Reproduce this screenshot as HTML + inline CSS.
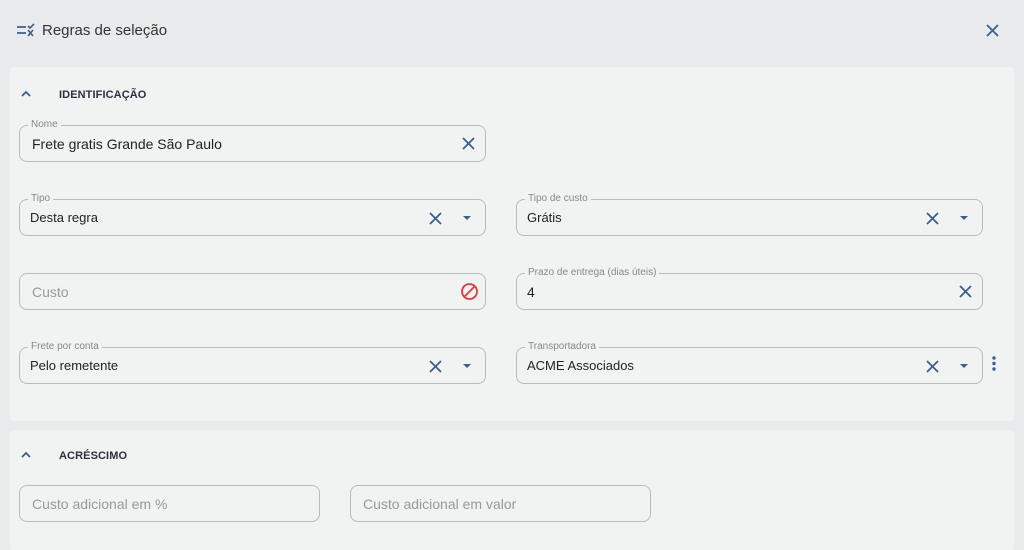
<!DOCTYPE html>
<html><head><meta charset="utf-8"><style>
*{box-sizing:border-box;margin:0;padding:0}
body{width:1024px;height:544px;overflow:hidden;background:#e9eaeb;font-family:"Liberation Sans",sans-serif;position:relative;color:#2b2b2b}
.hdr{position:absolute;left:0;top:0;width:1024px;height:62px}
.title{position:absolute;left:42px;top:22px;font-size:15px;color:#333}
.panel{position:absolute;left:10px;width:1004px;background:#f1f2f2;border-radius:3px}
.sec{position:absolute;font-size:11px;font-weight:bold;color:#2a3140;letter-spacing:0.1px}
.f{position:absolute;height:37px;border:1px solid #b9bcbe;border-radius:8px}
.lab{position:absolute;top:-7px;left:8px;font-size:10px;color:#888;background:#f1f2f2;padding:0 3px;line-height:12px}
.v{position:absolute;left:10px;top:10px;font-size:13px;color:#222}
.ph{color:#999;font-size:14px}
svg{position:absolute}
</style></head><body>
<div class="hdr">
<svg style="left:16px;top:23px" width="20" height="14" viewBox="0 0 20 14"><path d="M1 4h9M1 10h9" stroke="#3b5f8f" stroke-width="1.8"/><path d="M12 3l2 2 4-4M12 7l5 6M17 7l-5 6" stroke="#3b5f8f" stroke-width="1.6" fill="none"/></svg>
<div class="title">Regras de seleção</div>
<svg style="left:986px;top:24px" width="13" height="13" viewBox="0 0 13 13"><path d="M1 1l11 11M12 1L1 12" stroke="#3b5f8f" stroke-width="1.8"/></svg>
</div>
<div class="panel" style="top:67px;height:354px"></div>
<div class="panel" style="top:430px;height:120px"></div>
<svg style="left:20px;top:90px" width="12" height="8" viewBox="0 0 12 8"><path d="M2 6l4-4 4 4" stroke="#3b5f8f" stroke-width="1.8" fill="none"/></svg>
<div class="sec" style="left:59px;top:89px">IDENTIFICAÇÃO</div>
<svg style="left:20px;top:451px" width="12" height="8" viewBox="0 0 12 8"><path d="M2 6l4-4 4 4" stroke="#3b5f8f" stroke-width="1.8" fill="none"/></svg>
<div class="sec" style="left:59px;top:450px">ACRÉSCIMO</div>

<div class="f" style="left:19px;top:125px;width:467px"><div class="lab">Nome</div><div class="v" style="left:12px;font-size:14px">Frete gratis Grande São Paulo</div>
<svg style="left:442px;top:11px" width="13" height="13" viewBox="0 0 13 13"><path d="M1 1l11 11M12 1L1 12" stroke="#3b5f8f" stroke-width="1.8"/></svg></div>

<div class="f" style="left:19px;top:199px;width:467px"><div class="lab">Tipo</div><div class="v">Desta regra</div>
<svg style="left:409px;top:12px" width="13" height="13" viewBox="0 0 13 13"><path d="M1 1l11 11M12 1L1 12" stroke="#3b5f8f" stroke-width="1.8"/></svg>
<svg style="left:443px;top:16px" width="8" height="5"><path d="M0 0h8L4 4z" fill="#3b5f8f"/></svg></div>

<div class="f" style="left:516px;top:199px;width:467px"><div class="lab">Tipo de custo</div><div class="v">Grátis</div>
<svg style="left:409px;top:12px" width="13" height="13" viewBox="0 0 13 13"><path d="M1 1l11 11M12 1L1 12" stroke="#3b5f8f" stroke-width="1.8"/></svg>
<svg style="left:443px;top:16px" width="8" height="5"><path d="M0 0h8L4 4z" fill="#3b5f8f"/></svg></div>

<div class="f" style="left:19px;top:273px;width:467px"><div class="v ph" style="left:12px">Custo</div>
<svg style="left:440px;top:8px" width="19" height="19" viewBox="0 0 19 19"><circle cx="9.5" cy="9.5" r="7.5" stroke="#e0393e" stroke-width="1.8" fill="none"/><path d="M4 15L15 4" stroke="#e0393e" stroke-width="1.8"/></svg></div>

<div class="f" style="left:516px;top:273px;width:467px"><div class="lab">Prazo de entrega (dias úteis)</div><div class="v" style="font-size:14px">4</div>
<svg style="left:442px;top:11px" width="13" height="13" viewBox="0 0 13 13"><path d="M1 1l11 11M12 1L1 12" stroke="#3b5f8f" stroke-width="1.8"/></svg></div>

<div class="f" style="left:19px;top:347px;width:467px"><div class="lab">Frete por conta</div><div class="v">Pelo remetente</div>
<svg style="left:409px;top:12px" width="13" height="13" viewBox="0 0 13 13"><path d="M1 1l11 11M12 1L1 12" stroke="#3b5f8f" stroke-width="1.8"/></svg>
<svg style="left:443px;top:16px" width="8" height="5"><path d="M0 0h8L4 4z" fill="#3b5f8f"/></svg></div>

<div class="f" style="left:516px;top:347px;width:467px"><div class="lab">Transportadora</div><div class="v">ACME Associados</div>
<svg style="left:409px;top:12px" width="13" height="13" viewBox="0 0 13 13"><path d="M1 1l11 11M12 1L1 12" stroke="#3b5f8f" stroke-width="1.8"/></svg>
<svg style="left:443px;top:16px" width="8" height="5"><path d="M0 0h8L4 4z" fill="#3b5f8f"/></svg></div>
<svg style="left:992px;top:356px" width="4" height="15"><circle cx="2" cy="2" r="1.7" fill="#3b5f8f"/><circle cx="2" cy="7.5" r="1.7" fill="#3b5f8f"/><circle cx="2" cy="13" r="1.7" fill="#3b5f8f"/></svg>

<div class="f" style="left:19px;top:485px;width:301px"><div class="v ph" style="left:12px">Custo adicional em %</div></div>
<div class="f" style="left:350px;top:485px;width:301px"><div class="v ph" style="left:12px">Custo adicional em valor</div></div>
</body></html>
